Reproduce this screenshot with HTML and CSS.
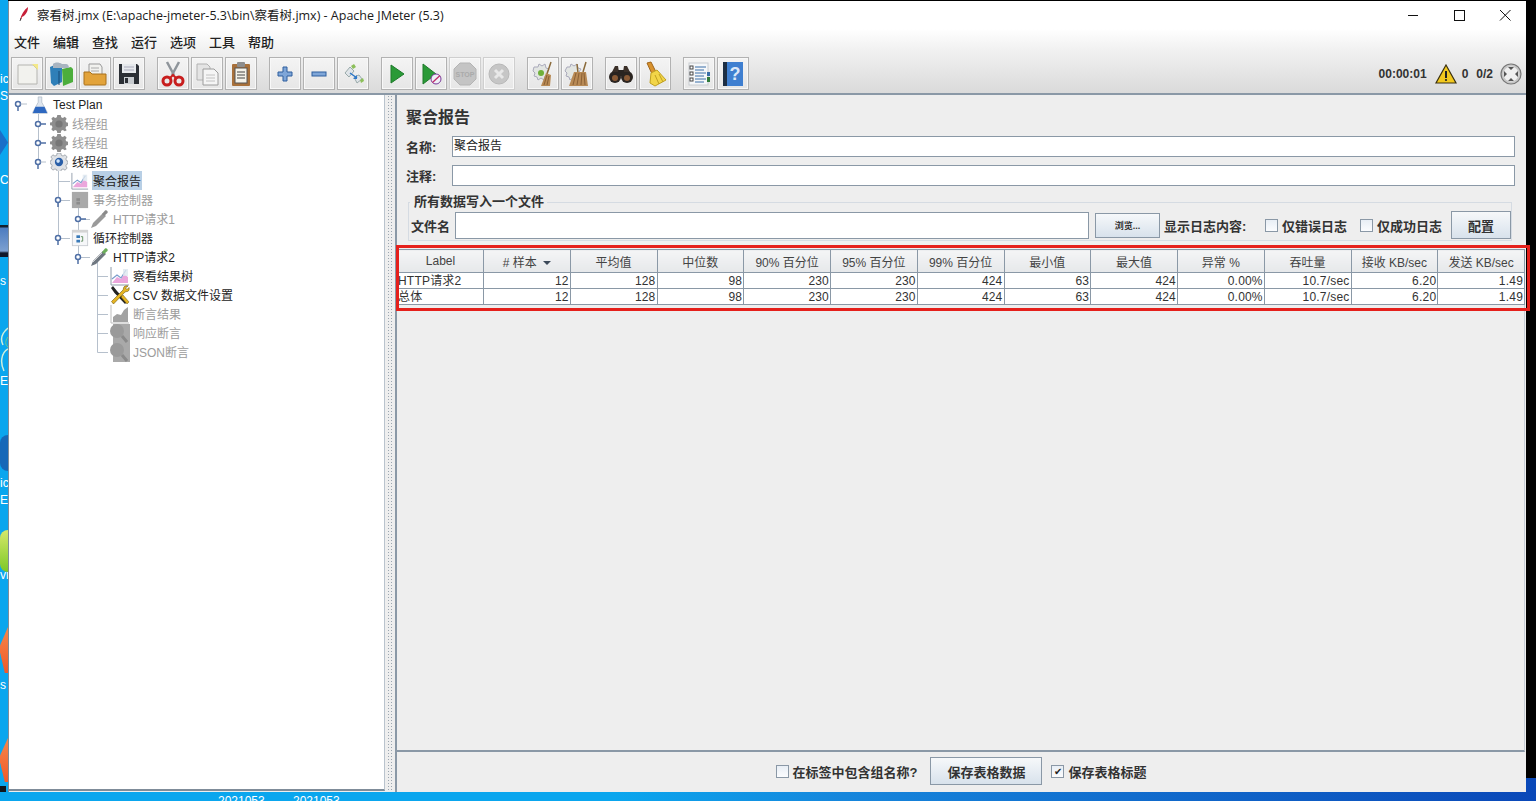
FILE: index.html
```html
<!DOCTYPE html>
<html lang="zh">
<head>
<meta charset="utf-8">
<title>察看树.jmx - Apache JMeter (5.3)</title>
<link rel="stylesheet" href="styles.css">
</head>
<body>
<svg class="defs" width="0" height="0">
  <defs>
    <symbol id="gear" viewBox="0 0 20 20">
      <path d="M8 0h4l.6 2.6 1.9.8L16.800 2l2.200 2.400-1.400 2.200.8 2 2.600.5v3.800l-2.600.6-.8 1.900 1.400 2.300L16.800 19l-2.300-1.400-1.900.8-.6 2.600H8l-.6-2.600-1.900-.8L3.200 19 1 16.600l1.400-2.300-.8-1.900L-1 11.800V8.900l2.600-.5.8-2L1 4.400 3.200 2l2.300 1.400 1.900-.8z" fill="#8d8d8d" transform="translate(.5 0) scale(.95)"/>
      <circle cx="10" cy="10" r="4" fill="#777"/>
    </symbol>
    <symbol id="gear-on" viewBox="0 0 20 20">
      <path d="M8 0h4l.6 2.600 1.900.8L16.800 2 19 4.400l-1.400 2.200.8 2 1.600.5v2.800l-1.600.6-.8 1.900 1.400 2.300-2.200 2.400-2.300-1.400-1.900.8-.6 2.500H8l-.6-2.500-1.900-.8L3.200 19 1 16.600l1.400-2.300-.8-1.900L0 11.800V8.900l1.600-.5.8-2L1 4.400 3.200 2l2.300 1.400 1.900-.8z" fill="#dfe2e6" stroke="#8d949c" stroke-width=".8"/>
      <circle cx="10" cy="10" r="4.600" fill="#2a5fa8"/>
      <circle cx="9" cy="9" r="2" fill="#cfe3f8"/>
    </symbol>
    <symbol id="chart" viewBox="0 0 20 20">
      <path d="M1 1v18h18" fill="none" stroke="#8e9aa8"/>
      <path d="M2 17l5-6 4 2 3-5 4 3v6z" fill="#eba6dc"/>
      <path d="M2 13l5-4 4 3 5-8" fill="none" stroke="#7a9ccc" stroke-width="1.200"/>
      <path d="M13 3h5v7h-5z" fill="#dfe7ef" opacity=".8"/>
    </symbol>
    <symbol id="grid-off" viewBox="0 0 20 20">
      <rect x="1" y="1" width="18" height="18" fill="#a9a9a9"/>
      <rect x="6" y="8" width="4" height="3" fill="#8c8c8c"/>
      <rect x="6" y="12" width="4" height="3" fill="#8c8c8c"/>
    </symbol>
    <symbol id="loop" viewBox="0 0 20 20">
      <rect x="1.500" y="1.500" width="17" height="17" fill="#f6f7f9" stroke="#c8ccd2"/>
      <rect x="1.500" y="1" width="17" height="3" fill="#d4d4d4"/>
      <rect x="6" y="7" width="4" height="3" fill="#3a7ab8"/>
      <rect x="6" y="12" width="4" height="3" fill="#3a7ab8"/>
      <path d="M11 8.500h2v5h-2" fill="none" stroke="#5a8a5a"/>
    </symbol>
    <symbol id="pipette" viewBox="0 0 20 20">
      <path d="M1 19l2-5L13 4l3 3L6 17z" fill="#6f7780"/>
      <path d="M12 5l3-3.500c1.500-1 3.500 1 2.500 2.500L14 7z" fill="#6cae5b"/>
      <path d="M3 15L12 6" stroke="#e8e8e8" stroke-width=".8"/>
    </symbol>
    <symbol id="pipette-off" viewBox="0 0 20 20">
      <path d="M1 19l2-5L13 4l3 3L6 17z" fill="#9a9a9a"/>
      <path d="M12 5l3-3.500c1.500-1 3.500 1 2.500 2.500L14 7z" fill="#8a8a8a"/>
    </symbol>
    <symbol id="tools" viewBox="0 0 20 20">
      <path d="M3 1l4 5 10 11-2 2L4.500 8 1 3z" fill="#222"/>
      <path d="M18 1c-2-.5-4 0-4.500 2-.2 1 0 1.500-.5 2L1.500 16.500 3.500 19 15 7c.5-.5 1.500-.3 2.500-.5 1.500-.5 2-2.500 1.500-4l-2 2-1.500-1.500z" fill="#e6b422" stroke="#6e5a10" stroke-width=".6"/>
      <path d="M13 10l6 7-2 2-6-7z" fill="#e6b422" stroke="#6e5a10" stroke-width=".5"/>
    </symbol>
    <symbol id="bars-off" viewBox="0 0 20 20">
      <path d="M1 1v18h18" fill="none" stroke="#bdbdbd"/>
      <path d="M3 18v-5l4-3 4 1 3-5 4-3v15z" fill="#a2a2a2"/>
    </symbol>
    <symbol id="assert-off" viewBox="0 0 20 20">
      <rect x="3" y="1" width="17" height="19" fill="#a9a9a9"/>
      <circle cx="7" cy="8" r="7" fill="#9a9a9a"/>
      <path d="M12 13l5 6" stroke="#8a8a8a" stroke-width="3"/>
    </symbol>
  </defs>
</svg>

<div class="desktop">
  <span class="frag f1">ic</span><span class="frag f2">S</span><span class="frag f3">C</span>
  <span class="frag f4">s</span><span class="frag f5">EV</span><span class="frag f6">ic</span>
  <span class="frag f7">E</span><span class="frag f8">vi</span><span class="frag f9">s</span>
  <i class="blob b1"></i><i class="blob b2"></i>
  <svg class="swirl" width="8" height="46" viewBox="0 0 8 46"><path d="M8 1C2 6 0 12 3 18M8 22C1 26 0 36 4 44" fill="none" stroke="#cfeedd" stroke-width="1.500"/><path d="M8 10C5 14 5 18 8 20" fill="none" stroke="#6cc890"/></svg>
  <i class="blob b4"></i>
  <i class="blob b5"></i><i class="blob b6"></i><i class="blob b7"></i><i class="blob b8"></i>
  <i class="corner"></i><i class="top-edge"></i>
  <span class="bottom-label bl1">2021053</span><span class="bottom-label bl2">2021053</span>

  <div class="window">
    <header class="titlebar">
      <svg class="feather" width="12" height="16" viewBox="0 0 12 16">
        <path d="M2 14C3 9 6 4 10 1c0 4-2 8-6 10L3 14z" fill="#c8203a"/>
        <path d="M2 15l1-3" stroke="#444"/>
      </svg>
      <span class="title-text">察看树.jmx (E:\apache-jmeter-5.3\bin\察看树.jmx) - Apache JMeter (5.3)</span>
      <div class="win-controls">
        <svg width="46" height="28" viewBox="0 0 46 28"><path d="M18 14.500h10" stroke="#111"/></svg>
        <svg width="46" height="28" viewBox="0 0 46 28"><rect x="18.500" y="9.500" width="10" height="10" fill="none" stroke="#111"/></svg>
        <svg width="46" height="28" viewBox="0 0 46 28"><path d="M18 9l10.500 10.500M28.500 9L18 19.500" stroke="#111"/></svg>
      </div>
    </header>

    <div class="chrome">
      <nav class="menubar">
        <span>文件</span><span>编辑</span><span>查找</span><span>运行</span><span>选项</span><span>工具</span><span>帮助</span>
      </nav>
      <div class="toolbar">
        <div class="tgroup">
          <button class="tbtn"><svg width="24" height="24" viewBox="0 0 24 24"><path d="M3 3h15l4 4v15H3z" fill="#f2f2ee" stroke="#b4b4b0"/><path d="M17 2h6v6z" fill="#f4e98a"/></svg></button>
          <button class="tbtn"><svg width="26" height="26" viewBox="0 0 26 26"><path d="M2 6l9-4 3 2v17l-8 4-3-3z" fill="#2f7fb8"/><path d="M14 8l9-2 2 2v13l-10 4z" fill="#4cae3c"/><path d="M5 3c2-2 6-2 9 0l4 0c2 0 3 2 3 4H5z" fill="#a8b4c0"/><path d="M11 10v14" stroke="#174a76"/></svg></button>
          <button class="tbtn"><svg width="26" height="26" viewBox="0 0 26 26"><path d="M7 3h11l2 3v8H7z" fill="#f1f1ee" stroke="#999"/><path d="M9 7h8M9 10h8" stroke="#aaa"/><path d="M2 11h6l2 2h14v10c0 1-1 1-1 1H3s-1 0-1-1z" fill="#e2a33b" stroke="#a8701c"/></svg></button>
          <button class="tbtn"><svg width="24" height="24" viewBox="0 0 24 24"><path d="M2 2h18l2 2v18H2z" fill="#2b2f35"/><rect x="5" y="2" width="14" height="9" fill="#e6e9ec"/><path d="M7 5h10M7 8h10" stroke="#aab"/><rect x="7" y="15" width="10" height="7" fill="#c8ccd0"/><rect x="8" y="16" width="3" height="5" fill="#2b2f35"/></svg></button>
        </div>
        <div class="tgroup">
          <button class="tbtn"><svg width="24" height="26" viewBox="0 0 24 26"><path d="M6 1l7 13M18 1l-7 13" stroke="#8f959b" stroke-width="2.500"/><circle cx="6" cy="20" r="4" fill="none" stroke="#c81e1e" stroke-width="3"/><circle cx="18" cy="20" r="4" fill="none" stroke="#c81e1e" stroke-width="3"/><path d="M9 17l3-3 3 3" fill="none" stroke="#c81e1e" stroke-width="2"/></svg></button>
          <button class="tbtn"><svg width="24" height="24" viewBox="0 0 24 24"><path d="M2 2h10l3 3v13H2z" fill="#e4e4e4" stroke="#b2b2b2"/><path d="M8 7h11l4 4v12H8z" fill="#f5f5f5" stroke="#9c9c9c"/><path d="M11 13h9M11 16h9M11 19h9" stroke="#c2c2c2"/></svg></button>
          <button class="tbtn"><svg width="24" height="26" viewBox="0 0 24 26"><rect x="3" y="3" width="18" height="22" rx="1" fill="#a8703a"/><rect x="6" y="7" width="12" height="15" fill="#f5f2e8" stroke="#555"/><rect x="8" y="1" width="8" height="5" rx="1" fill="#8d8d8d"/><path d="M8 11h8M8 14h8M8 17h8" stroke="#444"/></svg></button>
        </div>
        <div class="tgroup">
          <button class="tbtn"><svg width="18" height="18" viewBox="0 0 18 18"><path d="M7 2h4v5h5v4h-5v5H7v-5H2V7h5z" fill="#7fa6d8" stroke="#2e5f9e"/></svg></button>
          <button class="tbtn"><svg width="18" height="18" viewBox="0 0 18 18"><rect x="2" y="7" width="14" height="4" fill="#7fa6d8" stroke="#2e5f9e"/></svg></button>
          <button class="tbtn"><svg width="26" height="26" viewBox="0 0 26 26"><path d="M5 12l5-6 4 4-5 6z" fill="#dfe4e8" stroke="#9aa"/><path d="M14 16l5-2 3 4-5 4z" fill="#dfe4e8" stroke="#9aa"/><path d="M11 5l3-2 2 3-3 2z" fill="#8cbf5a"/><path d="M20 19l3-2 1 3-3 2z" fill="#8cbf5a"/><path d="M10 12l7 5" stroke="#2e78c8" stroke-width="1.500"/><path d="M17 14v4h-4z" fill="#2e78c8"/></svg></button>
        </div>
        <div class="tgroup">
          <button class="tbtn"><svg width="20" height="22" viewBox="0 0 20 22"><path d="M4 2l13 9-13 9z" fill="#2a9a37" stroke="#1f7a2b"/></svg></button>
          <button class="tbtn"><svg width="26" height="26" viewBox="0 0 26 26"><path d="M5 3l13 10L5 23z" fill="#2a9a37" stroke="#1f7a2b"/><circle cx="18" cy="18" r="5" fill="#eef0f6" stroke="#7a3a9a"/><path d="M14.500 21.500L22 14.500" stroke="#c02a6a" stroke-width="1.300"/></svg></button>
          <button class="tbtn off"><svg width="26" height="26" viewBox="0 0 26 26"><path d="M8 2h10l6 6v10l-6 6H8l-6-6V8z" fill="#c4c4c4" stroke="#b4b4b4"/><text x="13" y="16" class="stop-text">STOP</text></svg></button>
          <button class="tbtn off"><svg width="24" height="24" viewBox="0 0 24 24"><circle cx="12" cy="12" r="10" fill="#c6c6c6" stroke="#b8b8b8"/><path d="M8 8l8 8M16 8l-8 8" stroke="#e8e8e8" stroke-width="3"/></svg></button>
        </div>
        <div class="tgroup">
          <button class="tbtn"><svg width="26" height="26" viewBox="0 0 26 26"><path d="M4 6h4l1-3 3 2 3-2 1 4 3 1-2 3 1 3-3 1-1 4-3-2-3 2-1-3-3-1 1-3-2-2z" fill="#e2e5e2" stroke="#aab"/><circle cx="11" cy="12" r="3" fill="#6fb03a"/><path d="M21 1l-4 12" stroke="#8a6a3a" stroke-width="1.500"/><path d="M16 12l5 2-1 11h-9z" fill="#b88a55"/><path d="M14 24l3-10M17 24l2-9" stroke="#8a6035"/></svg></button>
          <button class="tbtn"><svg width="26" height="26" viewBox="0 0 26 26"><path d="M3 6l3 0 1-3 3 2 3-2 1 4 3 1-2 3 1 3-3 1-1 4-3-2-3 2-1-3-3-1 1-3-2-2z" fill="#e2e5e2" stroke="#aab"/><path d="M22 1l-3 10M13 3l1 9" stroke="#8a6a3a" stroke-width="1.500"/><path d="M10 11l12 0 2 14H5z" fill="#b88a55"/><path d="M9 24l3-12M13 24l2-12M17 24l1-12M21 24l-1-12" stroke="#8a6035"/></svg></button>
        </div>
        <div class="tgroup">
          <button class="tbtn"><svg width="26" height="20" viewBox="0 0 26 20"><circle cx="7" cy="13" r="6" fill="#2a2420"/><circle cx="19" cy="13" r="6" fill="#2a2420"/><path d="M4 8l3-6h3l1 6zM22 8l-3-6h-3l-1 6z" fill="#3a2f28"/><rect x="10" y="6" width="6" height="6" fill="#2a2420"/><circle cx="7" cy="14" r="3" fill="#8a5a35"/><circle cx="19" cy="14" r="3" fill="#8a5a35"/></svg></button>
          <button class="tbtn"><svg width="26" height="26" viewBox="0 0 26 26"><path d="M5 2l4-1 5 10-4 2z" fill="#d8922e" stroke="#a0651a"/><path d="M9 12l6-3 9 10-11 6-5-3z" fill="#f2d548" stroke="#c0a020"/><path d="M13 14l4 9M17 13l4 8" stroke="#c0a020"/></svg></button>
        </div>
        <div class="tgroup">
          <button class="tbtn"><svg width="24" height="24" viewBox="0 0 24 24"><rect x="2" y="1" width="19" height="22" fill="#f5f7f9" stroke="#c8ccd0"/><g fill="#fff" stroke="#444"><rect x="3" y="4" width="3" height="3"/><rect x="3" y="10" width="3" height="3"/><rect x="3" y="16" width="3" height="3"/></g><path d="M8 5h11M8 8h9M8 11h11M8 14h9M8 17h11M8 20h9" stroke="#3a6ea8"/><rect x="20" y="10" width="3" height="4" fill="#3a6ea8"/><rect x="20" y="15" width="3" height="5" fill="#2f7a3a"/></svg></button>
          <button class="tbtn"><svg width="22" height="26" viewBox="0 0 22 26"><rect x="3" y="1" width="18" height="24" fill="#3f7fd0"/><rect x="1" y="1" width="4" height="24" fill="#1c2e44"/><text x="13" y="19" class="help-text">?</text></svg></button>
        </div>
        <div class="status">
          <span class="timer">00:00:01</span>
          <svg class="warn" width="22" height="20" viewBox="0 0 22 20"><path d="M11 1l10 18H1z" fill="#f3c91e" stroke="#3a3010" stroke-width="1.200"/><path d="M11 7v7" stroke="#222" stroke-width="2"/><circle cx="11" cy="16" r="1.100" fill="#222"/></svg>
          <span class="count">0</span>
          <span class="ratio">0/2</span>
          <svg class="expand" width="22" height="22" viewBox="0 0 22 22"><circle cx="11" cy="11" r="10" fill="#c8c8c8" stroke="#777" stroke-width="1.200"/><circle cx="11" cy="11" r="7.500" fill="#efefef"/><path d="M8 4h6l-3 3zM8 18h6l-3-3zM4 8v6l3-3zM18 8v6l-3-3z" fill="#555"/></svg>
        </div>
      </div>
    </div>

    <main class="split">
      <section class="tree">
        <svg class="tree-lines" width="376" height="300" viewBox="9 95 376 300">
          <g fill="none" stroke="#b6c0cc">
            <path d="M38.500 109V162"/>
            <path d="M58.500 167V238M58.500 181.500H70M58.500 200.500H70M58.500 238.500H70"/>
            <path d="M78.500 205V257M78.500 219.500H90M78.500 257.500H90"/>
            <path d="M97.500 262V352.500M97.500 276.500H108M97.500 295.500H108M97.500 314.500H108M97.500 333.500H108M97.500 352.500H108"/>
          </g>
          <g fill="#fff" stroke="#4f6fa5" stroke-width="1.500">
            <circle cx="18" cy="104" r="2.500"/><path d="M18 106.500V111"/><path d="M20.500 104H27" stroke="#b6c0cc" stroke-width="1"/>
            <circle cx="38" cy="124" r="2.500"/><path d="M40.500 124H46"/>
            <circle cx="38" cy="143" r="2.500"/><path d="M40.500 143H46"/>
            <circle cx="38" cy="162" r="2.500"/><path d="M38 164.500V169"/><path d="M40.500 162H46" stroke="#b6c0cc" stroke-width="1"/>
            <circle cx="58" cy="200" r="2.500"/><path d="M58 202.500V207"/>
            <circle cx="58" cy="238" r="2.500"/><path d="M58 240.500V245"/>
            <circle cx="78" cy="219" r="2.500"/><path d="M80.500 219H86"/>
            <circle cx="78" cy="257" r="2.500"/><path d="M78 259.500V264"/>
          </g>
        </svg>
        <div class="node lv0"><svg class="ni" viewBox="0 0 20 20"><path d="M8 1h4v6l6 11c.3 1-.3 2-1 2H3c-.7 0-1.300-1-1-2L8 7z" fill="#dfe6ee" stroke="#9aa8b8" stroke-width=".6"/><path d="M5 12h10l3 7H2z" fill="#2e68c0"/></svg><span>Test Plan</span></div>
        <div class="node lv1 off"><svg class="ni"><use href="#gear"/></svg><span>线程组</span></div>
        <div class="node lv1 off"><svg class="ni"><use href="#gear"/></svg><span>线程组</span></div>
        <div class="node lv1"><svg class="ni"><use href="#gear-on"/></svg><span>线程组</span></div>
        <div class="node lv2"><svg class="ni"><use href="#chart"/></svg><span class="selected">聚合报告</span></div>
        <div class="node lv2 off"><svg class="ni"><use href="#grid-off"/></svg><span>事务控制器</span></div>
        <div class="node lv3 off"><svg class="ni"><use href="#pipette-off"/></svg><span>HTTP请求1</span></div>
        <div class="node lv2"><svg class="ni"><use href="#loop"/></svg><span>循环控制器</span></div>
        <div class="node lv3"><svg class="ni"><use href="#pipette"/></svg><span>HTTP请求2</span></div>
        <div class="node lv4"><svg class="ni"><use href="#chart"/></svg><span>察看结果树</span></div>
        <div class="node lv4"><svg class="ni"><use href="#tools"/></svg><span>CSV 数据文件设置</span></div>
        <div class="node lv4 off"><svg class="ni"><use href="#bars-off"/></svg><span>断言结果</span></div>
        <div class="node lv4 off"><svg class="ni"><use href="#assert-off"/></svg><span>响应断言</span></div>
        <div class="node lv4 off"><svg class="ni"><use href="#assert-off"/></svg><span>JSON断言</span></div>
      </section>

      <div class="divider"></div>

      <section class="panel">
        <h1 class="panel-title">聚合报告</h1>
        <div class="field-row">
          <label class="b-label name-label">名称:</label>
          <div class="input">聚合报告</div>
        </div>
        <div class="field-row">
          <label class="b-label name-label">注释:</label>
          <div class="input"></div>
        </div>
        <fieldset class="fileset">
          <legend class="b-label">所有数据写入一个文件</legend>
          <div class="file-row">
            <label class="b-label file-label">文件名</label>
            <div class="input file-input"></div>
            <button class="btn browse">浏览...</button>
            <span class="b-label log-label">显示日志内容:</span>
            <span class="check"><i class="box"></i><span class="b-label">仅错误日志</span></span>
            <span class="check"><i class="box"></i><span class="b-label">仅成功日志</span></span>
            <button class="btn config">配置</button>
          </div>
        </fieldset>
        <div class="table-pane">
          <table class="report">
            <thead>
              <tr><th>Label</th><th># 样本 <i class="sort"></i></th><th>平均值</th><th>中位数</th><th>90% 百分位</th><th>95% 百分位</th><th>99% 百分位</th><th>最小值</th><th>最大值</th><th>异常 %</th><th>吞吐量</th><th>接收 KB/sec</th><th>发送 KB/sec</th></tr>
            </thead>
            <tbody>
              <tr><td>HTTP请求2</td><td>12</td><td>128</td><td>98</td><td>230</td><td>230</td><td>424</td><td>63</td><td>424</td><td>0.00%</td><td>10.7/sec</td><td>6.20</td><td>1.49</td></tr>
              <tr><td>总体</td><td>12</td><td>128</td><td>98</td><td>230</td><td>230</td><td>424</td><td>63</td><td>424</td><td>0.00%</td><td>10.7/sec</td><td>6.20</td><td>1.49</td></tr>
            </tbody>
          </table>
        </div>
        <div class="footer">
          <span class="check group-name"><i class="box"></i><span class="b-label">在标签中包含组名称?</span></span>
          <button class="btn save">保存表格数据</button>
          <span class="check"><i class="box checked">✔</i><span class="b-label">保存表格标题</span></span>
        </div>
      </section>
    </main>
    <div class="highlight"></div>
  </div>
</div>
</body>
</html>
```

FILE: styles.css
```css
* { box-sizing: border-box; }
html, body { margin: 0; padding: 0; height: 100%; overflow: hidden; }
body { font-family: "Liberation Sans", "Noto Sans CJK SC", sans-serif; font-size: 12px; color: #222; }
.defs { position: absolute; }
.desktop { position: relative; width: 1536px; height: 801px; overflow: hidden; background: linear-gradient(to right, #0aa6ee 0, #0aa6ee 40%, #1686dc 55%, #0a48b8 100%); }

.frag { position: absolute; left: 0; color: #fff; font-size: 12px; line-height: 14px; white-space: nowrap; }
.f1 { top: 72px; } .f2 { top: 89px; } .f3 { top: 173px; } .f4 { top: 274px; }
.f5 { top: 374px; } .f6 { top: 476px; } .f7 { top: 493px; } .f8 { top: 568px; } .f9 { top: 678px; }
.blob { position: absolute; left: 0; width: 8px; }
.top-edge { position: absolute; left: 8px; top: 0; width: 1528px; height: 1px; background: #000; }
.b1 { top: 225px; height: 32px; background: linear-gradient(#14202e 0 2px, #4c7cc0 3px, #7ca0d0 26px, #10182a 28px); }
.b2 { top: 130px; height: 25px; background: #1a6fc8; clip-path: polygon(0 0, 100% 50%, 0 100%); }
.swirl { position: absolute; left: 0; top: 327px; }
.b4 { top: 435px; height: 36px; background: #1668b8; border-radius: 14px 0 0 14px; }
.b5 { top: 530px; height: 42px; background: linear-gradient(#d6e86a, #7cc828); border-radius: 14px 0 0 14px; }
.b6 { top: 627px; height: 46px; background: linear-gradient(#f6874a, #ef5a2a); clip-path: polygon(100% 0, 100% 100%, 60% 100%, 0 55%, 0 40%); }
.b7 { top: 738px; height: 44px; background: linear-gradient(#f6874a, #ef5a2a); clip-path: polygon(100% 0, 100% 100%, 60% 100%, 0 55%, 0 40%); }
.b8 { top: 786px; height: 6px; background: #10161c; width: 6px; }
.corner { position: absolute; right: 0; top: 0; width: 10px; height: 778px; background: #000; }
.bottom-label { position: absolute; top: 794px; color: #fff; font-size: 12px; line-height: 14px; }
.bl1 { left: 218px; } .bl2 { left: 293px; }

.window { position: absolute; left: 8px; top: 1px; width: 1518px; height: 791px; display: flex; flex-direction: column; background: #eee; border-left: 1px solid #7f8c99; }

.titlebar { flex: 0 0 28px; min-height: 0; display: flex; align-items: center; background: #fff; padding-left: 9px; font-family: "Open Sans", "Noto Sans CJK SC", sans-serif; font-size: 12.5px; color: #1a1a1a; }
.feather { margin-right: 7px; margin-top: -3px; }
.title-text { margin-top: -1px; }
.win-controls { margin-left: auto; display: flex; margin-right: -2px; }

.chrome { flex: 0 0 66px; min-height: 0; background: linear-gradient(#fff, #f2f2f2 30%, #dadada); border-bottom: 2px solid #8a98a6; display: flex; flex-direction: column; }
.menubar { flex: 0 0 28px; display: flex; gap: 13px; padding: 5px 0 0 5px; font-size: 13px; font-weight: 500; line-height: 17px; color: #222; }
.toolbar { flex: 1; display: flex; gap: 12px; padding-left: 2px; align-items: flex-start; }
.tgroup { display: flex; gap: 2px; }
.tbtn { width: 32px; height: 33px; padding: 0; display: flex; align-items: center; justify-content: center; background: linear-gradient(#f4f4f4, #e6e6e6); border: 1px solid #b2b2b2; box-shadow: 0 0 0 1px #f8f8f8 inset; }
.tbtn.off { border-color: #cfcfcf; }
.stop-text { font: bold 7px "Liberation Sans", sans-serif; fill: #aaa; text-anchor: middle; }
.help-text { font: bold 18px "Liberation Sans", sans-serif; fill: #dce8f8; text-anchor: middle; }
.status { margin-left: auto; display: flex; align-items: center; height: 33px; color: #333; font-weight: 700; font-size: 12px; padding-right: 4px; }
.timer { margin-right: 8px; }
.warn { margin-right: 5px; }
.count { margin-right: 8px; }
.ratio { margin-right: 7px; }

.split { flex: 1; min-height: 0; display: flex; background: #eee; position: relative; }
.tree { position: relative; width: 376px; height: 696px; background: #fff; border-right: 1px solid #b9c3cd; border-bottom: 2px solid #7f8c99; flex: none; }
.tree-lines { position: absolute; left: 0; top: 0; pointer-events: none; }
.node { position: relative; height: 19px; display: flex; align-items: center; color: #222; white-space: nowrap; font-size: 12px; }
.node.off { color: #9c9c9c; }
.ni { width: 18px; height: 18px; flex: none; margin-right: 4px; }
.lv0 { padding-left: 22px; }
.lv1 { padding-left: 41px; }
.lv2 { padding-left: 62px; }
.lv3 { padding-left: 81px; }
.lv3 .ni { width: 20px; height: 20px; margin-right: 3px; }
.lv4 { padding-left: 101px; }
.lv4 .ni { width: 20px; height: 20px; margin-right: 3px; }
.selected { background: #b8cfe5; padding: 1px 1px; margin-left: -1px; }

.divider { width: 10px; flex: none; background-color: #eee; background-image: radial-gradient(#9aa5b0 .7px, transparent .8px); background-size: 3px 3px; background-position: 2px 0; background-clip: content-box; padding: 0 1px 0 1px; }

.panel { flex: 1; min-width: 0; display: flex; flex-direction: column; border-left: 2px solid #8a98a6; padding: 0 1px 0 0; }
.panel-title { margin: 13px 0 0 9px; font-size: 16px; line-height: 20px; font-weight: 700; color: #333; height: 26px; }
.b-label { font-size: 13px; font-weight: 700; color: #333; white-space: nowrap; }
.field-row { display: flex; align-items: center; height: 21px; margin-bottom: 8px; margin-left: 9px; margin-top: 2px; }
.field-row + .field-row { margin-top: 0; }
.name-label { width: 46px; flex: none; }
.input { flex: 1; height: 21px; background: #fff; border: 1px solid #8a98a6; padding-left: 1px; line-height: 19px; font-size: 12px; margin-right: 10px; color: #222; }
.fileset { margin: 0 13px 0 11px; padding: 0 0 0 1px; border: 1px solid #d5dbe2; height: 47px; min-width: 0; }
.fileset legend { padding: 0 3px 0 4px; margin-left: 0; line-height: 16px; }
.file-row { display: flex; align-items: center; height: 28px; margin-top: 1px; margin-left: 1px; }
.file-label { width: 44px; flex: none; }
.file-input { flex: none; width: 634px; height: 27px; margin-right: 6px; }
.btn { border: 1px solid #8a98a6; background: linear-gradient(#f6f8fa, #d8e2ec); font-family: inherit; font-size: 13px; font-weight: 700; color: #333; padding: 0; }
.browse { width: 65px; height: 25px; font-size: 9px; margin-right: 4px; flex: none; }
.log-label { width: 101px; flex: none; }
.check { display: inline-flex; align-items: center; gap: 4px; flex: none; }
.file-row .check { margin-right: 13px; }
.box { display: inline-flex; align-items: center; justify-content: center; width: 13px; height: 13px; border: 1px solid #8a98a6; background: linear-gradient(#e8eef5, #fbfcfe); font-style: normal; font-size: 10px; line-height: 11px; color: #222; }
.config { width: 60px; height: 28px; margin-left: -4px; flex: none; }

.table-pane { flex: 1; margin-top: 8px; border-right: 1px solid #c5ccd4; border-bottom: 2px solid #8a98a6; min-height: 0; }
.report { width: 1128px; table-layout: fixed; border-collapse: collapse; font-size: 12px; color: #333; }
.report th { height: 23px; font-weight: 400; background: linear-gradient(#f4f5f6, #e6e8ea); border: 1px solid #8a98a6; padding: 0; text-align: center; color: #444; white-space: nowrap; }
.report th:first-child { width: 86px; }
.report td { height: 16px; background: #fff; border: 1px solid #8a98a6; padding: 0 1px; text-align: right; line-height: 14px; letter-spacing: .2px; white-space: nowrap; overflow: hidden; }
.report td:first-child { text-align: left; padding-left: 0; }
.sort { display: inline-block; margin-left: 3px; width: 0; height: 0; vertical-align: 2px; border-left: 4px solid transparent; border-right: 4px solid transparent; border-top: 4px solid #3c4a5a; }

.footer { flex: 0 0 40px; display: flex; align-items: center; justify-content: center; gap: 9px; padding-bottom: 2px; }
.group-name { margin-right: 4px; }
.save { width: 112px; height: 28px; }

.highlight { position: absolute; left: 387px; top: 244px; width: 1134px; height: 66px; border: 3px solid #e5201b; pointer-events: none; }
```
